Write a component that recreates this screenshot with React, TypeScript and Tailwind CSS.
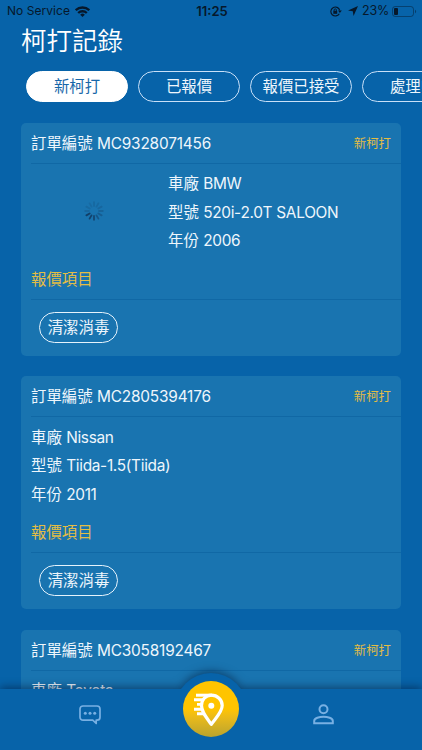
import { ReactNode } from "react";
import clsx from "clsx";

const tabs = ["新柯打", "已報價", "報價已接受", "處理中"];

const orders = [
  { id: "MC9328071456", brand: "BMW", model: "520i-2.0T SALOON", year: "2006", loading: true },
  { id: "MC2805394176", brand: "Nissan", model: "Tiida-1.5(Tiida)", year: "2011", loading: false },
  { id: "MC3058192467", brand: "Toyota", model: "", year: "", loading: false },
];

function StatusBar() {
  return (
    <div className="grid h-[22px] grid-cols-3 items-center pr-[5px] pl-[7px] text-[12px] leading-none text-[#06182b]">
      <div className="flex items-center gap-[5px] tracking-[0.05px] whitespace-nowrap">
        No Service
        <svg width="15" height="11" viewBox="0 0 15 11" fill="none" stroke="currentColor" strokeWidth="2.3">
          <path d="M0.8 4.2a9.6 9.6 0 0 1 13.4 0" />
          <path d="M3.2 7a6.2 6.2 0 0 1 8.6 0" />
          <path d="M7.5 11 5.2 8.7a3.3 3.3 0 0 1 4.6 0z" fill="currentColor" stroke="none" />
        </svg>
      </div>
      <div className="text-center text-[13px] font-semibold">11:25</div>
      <div className="flex items-center justify-end">
        <svg className="mr-[6px]" width="12" height="11" viewBox="0 0 12 11" fill="none" stroke="currentColor" strokeWidth="1.2">
          <path d="M9.3 7.7A4.5 4.5 0 1 1 9.7 4.3" />
          <path d="m8 4.4 3.800 0-1.900 2.600z" fill="currentColor" stroke="none" />
          <rect x="3.3" y="4.8" width="3.9" height="3" fill="currentColor" stroke="none" />
          <path d="M4.1 5V4a1.150 1.150 0 0 1 2.300 0v1" strokeWidth="0.9" />
        </svg>
        <svg className="mr-[4px]" width="10" height="10" viewBox="0 0 9 9" fill="currentColor">
          <path d="M9 0 5 9 4.300 4.700 0 4z" />
        </svg>
        <span className="text-[12.5px] tracking-[-0.2px]">23%</span>
        <svg className="ml-[3px]" width="25" height="11" viewBox="0 0 25 11">
          <rect x="0.5" y="0.5" width="21" height="10" rx="2.7" fill="none" stroke="#06182b" strokeOpacity="0.45" />
          <rect x="2" y="2" width="4" height="7" rx="1" fill="#06182b" />
          <path d="M23 3.8c1.500.6 1.500 2.800 0 3.400z" fill="#06182b" fillOpacity="0.5" />
        </svg>
      </div>
    </div>
  );
}

function Spinner() {
  // darkest spoke sits at the lower left and fades clockwise
  const opacity = [0.18, 0.18, 0.22, 0.28, 0.38, 0.5, 0.75, 0.85, 0.9, 0.22, 0.18, 0.15];
  return (
    <svg width="20" height="20" viewBox="0 0 20 20" stroke="#12385f" strokeWidth="1.8" strokeLinecap="round">
      {opacity.map((o, i) => (
        <line key={i} x1="10" y1="1.2" x2="10" y2="5" strokeOpacity={o} transform={`rotate(${i * 30} 10 10)`} />
      ))}
    </svg>
  );
}

function Divider({ children }: { children: ReactNode }) {
  return <div className="ml-[10px] border-b border-[#1068a5] pr-[10px]">{children}</div>;
}

function Field({ label, value }: { label: string; value: string }) {
  return (
    <p>
      {label} <span className="tracking-[-0.3px]">{value}</span>
    </p>
  );
}

function OrderCard({ order }: { order: (typeof orders)[number] }) {
  return (
    <div className="h-[233px] shrink-0 rounded-[5px] bg-[#1974b0] text-[15.4px] text-[#eef6fc]">
      <Divider>
        <div className="flex h-[40px] items-center justify-between pt-[2px]">
          <span>
            訂單編號 <span className="tracking-[-0.18px]">{order.id}</span>
          </span>
          <span className="pt-px text-[12.4px] text-[#e3bd45]">新柯打</span>
        </div>
      </Divider>
      <div className="flex h-[94px] pt-[6.5px] pl-[10px]">
        {order.loading && (
          <div className="flex w-[137px] items-center justify-center pr-[11px] pb-[5px]">
            <Spinner />
          </div>
        )}
        <div className="leading-[28.5px]">
          <Field label="車廠" value={order.brand} />
          {order.model && <Field label="型號" value={order.model} />}
          {order.year && <Field label="年份" value={order.year} />}
        </div>
      </div>
      <Divider>
        <div className="flex h-[41px] items-center pt-[3px] text-[#e3bd45]">報價項目</div>
      </Divider>
      <div className="pt-[12px] pl-[18px]">
        <span className="flex h-[31px] w-[79px] items-center justify-center rounded-full border border-[#e6f3fc] pt-px whitespace-nowrap">
          清潔消毒
        </span>
      </div>
    </div>
  );
}

function BottomNav() {
  return (
    <nav className="relative h-[61.5px] shrink-0">
      <div className="absolute inset-0 drop-shadow-[0_-2px_4px_rgba(0,20,50,0.5)]">
        <div className="absolute -top-[16px] left-[175px] size-[72px] rounded-full bg-[#0763a9]" />
        <div className="absolute inset-0 bg-[#0763a9]" />
      </div>
      <div className="relative flex h-full text-[#78b0e3]">
        <div className="flex w-[180px] justify-center pt-[16px]">
          <svg width="22" height="20" viewBox="0 0 22 20" fill="none" stroke="currentColor" strokeWidth="1.7">
            <path
              d="M4 1h14a3 3 0 0 1 3 3v8.2a3 3 0 0 1-3 3h-.8V18.5l-3.400-3.300H4a3 3 0 0 1-3-3V4a3 3 0 0 1 3-3z"
              strokeLinejoin="round"
            />
            <g fill="currentColor" stroke="none">
              <circle cx="6.3" cy="8.3" r="1.5" />
              <circle cx="11" cy="8.3" r="1.5" />
              <circle cx="15.7" cy="8.3" r="1.5" />
            </g>
          </svg>
        </div>
        <div className="-mt-[8px] ml-[3px] flex size-[56px] items-center justify-center rounded-full bg-linear-to-b from-[#ffc400] from-50% to-[#b9a32c]">
          <svg width="56" height="56" viewBox="0 0 56 56" fill="none" stroke="#fff" strokeLinejoin="round">
            <path d="M13 14.2h16" strokeWidth="3" />
            <path d="M11 18.8h10M14 23.400h5M11 28.200h8.500M14 32.800h8" strokeWidth="2.9" />
            <path
              d="M28.300 14.200c-5.800 0-9.800 4.600-9.800 10.400 0 6.400 4.800 11.700 9.800 18.800 5-7.100 10.900-12.400 10.900-18.800 0-5.800-4.700-10.400-10.900-10.400z"
              strokeWidth="3.2"
            />
            <circle cx="28.3" cy="24.7" r="3" fill="#fff" stroke="none" />
          </svg>
        </div>
        <div className="ml-[74px] pt-[15px]">
          <svg width="21" height="21" viewBox="0 0 21 21" fill="none" stroke="currentColor" strokeWidth="2">
            <circle cx="10.5" cy="5.3" r="4" />
            <path d="M1.2 19.2v-2.300c0-2.800 5.300-4.200 9.300-4.200s9.300 1.400 9.300 4.200v2.300z" />
          </svg>
        </div>
      </div>
    </nav>
  );
}

export default function App() {
  return (
    <div className="flex h-[750px] w-[422px] flex-col overflow-hidden bg-[#0763a9] font-['Inter','Noto_Sans_CJK_TC',sans-serif]">
      <StatusBar />
      <h1 className="pl-[21px] text-[25.5px] leading-[38px] font-[350] text-white">柯打記錄</h1>
      <div className="mt-[11px] flex shrink-0 gap-[10px] overflow-hidden pl-[26px]">
        {tabs.map((tab, i) => (
          <div
            key={tab}
            className={clsx(
              "flex h-[31px] w-[102px] shrink-0 items-center justify-center rounded-full border pt-px text-[15.4px] whitespace-nowrap",
              i === 0 ? "border-white bg-white text-[#1767a9]" : "border-[#c9e0f8] text-[#eef6fc]"
            )}
          >
            {tab}
          </div>
        ))}
      </div>
      <div className="flex min-h-0 flex-1 flex-col gap-[20.5px] overflow-hidden px-[21px] pt-[20.5px]">
        {orders.map((order) => (
          <OrderCard key={order.id} order={order} />
        ))}
      </div>
      <BottomNav />
    </div>
  );
}
